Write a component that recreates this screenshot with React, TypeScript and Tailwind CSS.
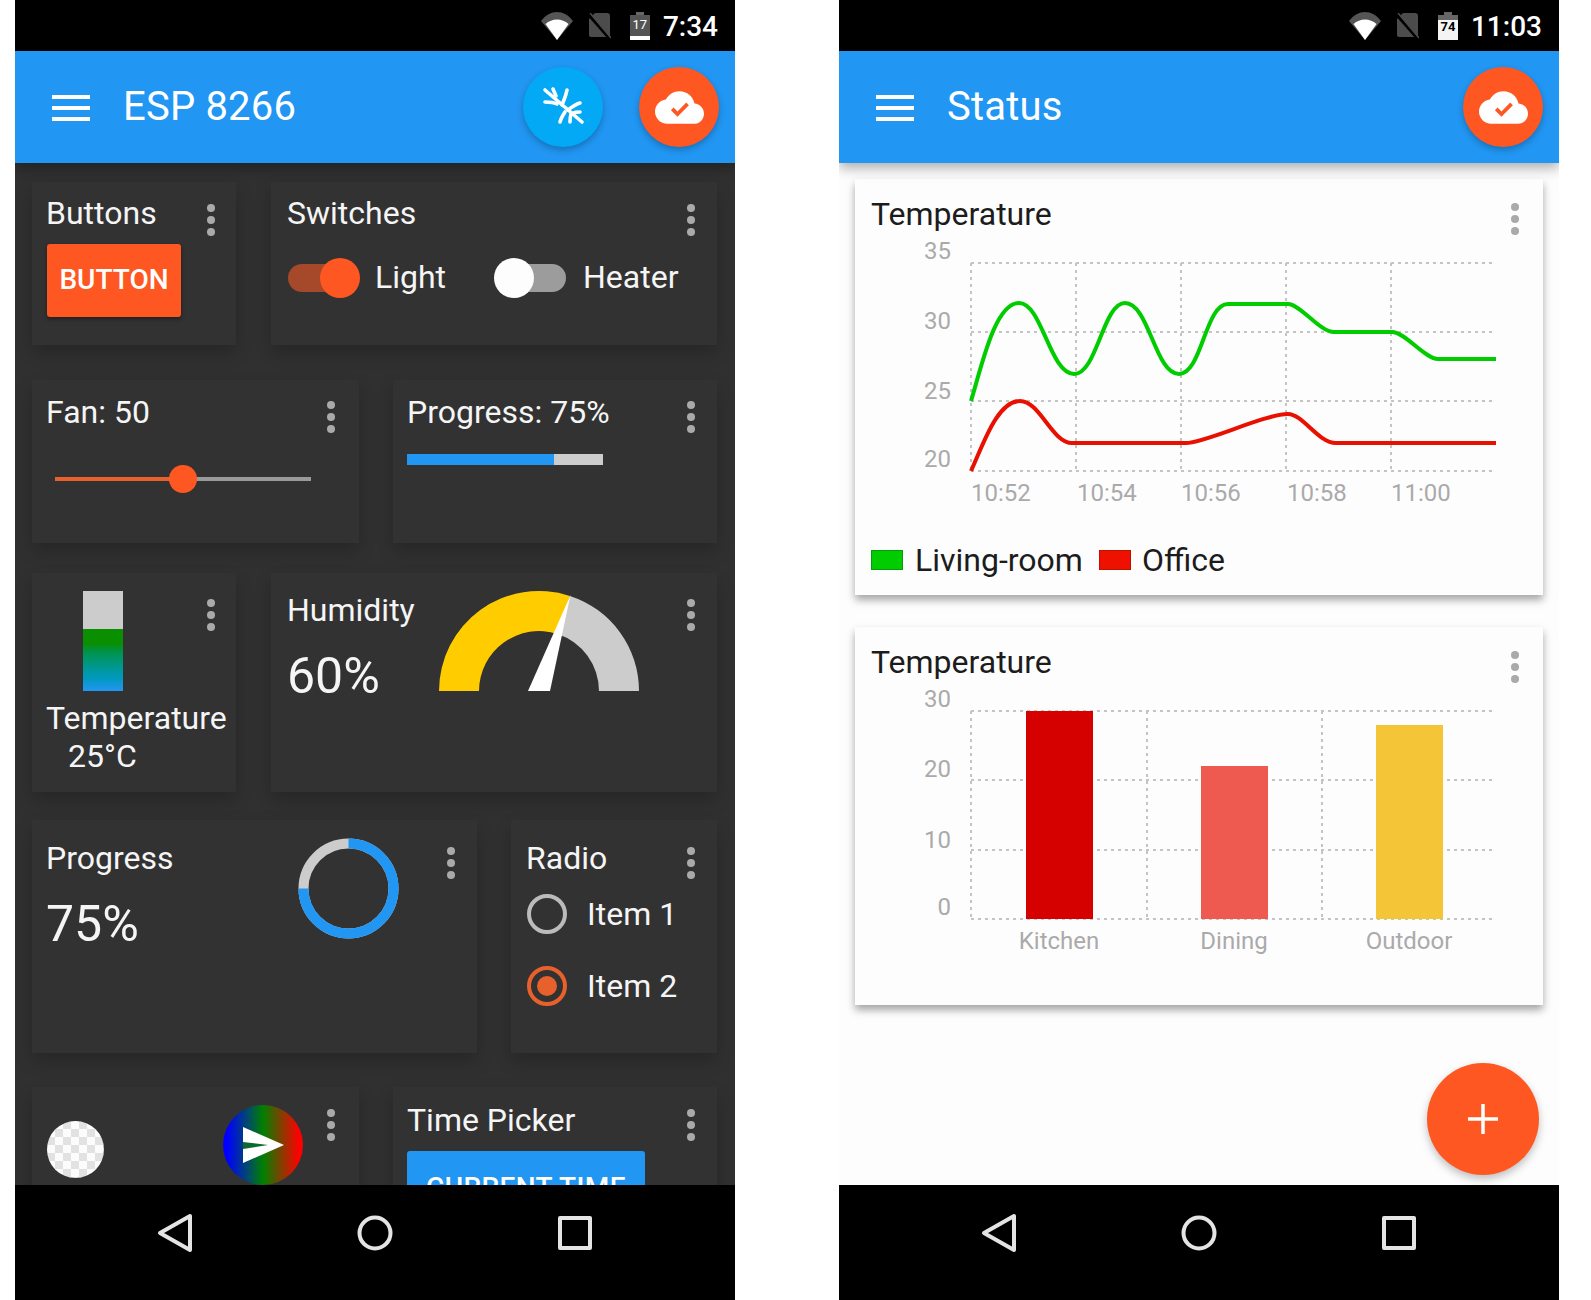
import type { ReactNode } from 'react';

function Dots({ className }: { className: string }) {
  return (
    <div className={`absolute flex flex-col gap-[4px] ${className}`}>
      <span className="w-[8px] h-[8px] rounded-full bg-[#aaaaaa]" />
      <span className="w-[8px] h-[8px] rounded-full bg-[#aaaaaa]" />
      <span className="w-[8px] h-[8px] rounded-full bg-[#aaaaaa]" />
    </div>
  );
}

function DarkCard({ className, dots, children }: { className: string; dots: string; children: ReactNode }) {
  return (
    <div className={`relative shrink-0 bg-[#323232] shadow-[0_8px_16px_rgba(0,0,0,0.2)] ${className}`}>
      {children}
      <Dots className={dots} />
    </div>
  );
}

function Title({ children }: { children: ReactNode }) {
  return <div className="-ml-[1px] h-[38px] text-[32px] leading-[38px] whitespace-nowrap">{children}</div>;
}

function Switch({ on }: { on: boolean }) {
  return (
    <div className="relative w-[72px] h-[40px]">
      <div
        className={
          on
            ? 'absolute left-0 top-[6px] w-[64px] h-[28px] rounded-full bg-[#a5492a]'
            : 'absolute left-[8px] top-[6px] w-[64px] h-[28px] rounded-full bg-[#9c9c9c]'
        }
      />
      <div
        className={
          on
            ? 'absolute right-0 top-0 w-[40px] h-[40px] rounded-full bg-[#ff5722]'
            : 'absolute left-0 top-0 w-[40px] h-[40px] rounded-full bg-[#fdfdfd]'
        }
      />
    </div>
  );
}

function StatusBar({ time, battery, full }: { time: string; battery: string; full: boolean }) {
  return (
    <div className="h-[51px] bg-black flex items-center justify-end pr-[17px] text-white">
      <svg width="32" height="28" viewBox="0 0 32 28" className="mr-[15px] mt-[1px]">
        <path d="M0 9C9 -3 23 -3 32 9L16 28Z" fill="#555555" />
        <path d="M4.5 12C11 6 21 6 27.5 12L16 28Z" fill="#ffffff" />
      </svg>
      <svg width="23" height="27" viewBox="0 0 23 27" className="mr-[19px] mt-[2px]">
        <path d="M7 0H19C21 0 22 1 22 3V23L21 24H3C2 24 1 23 1 22V6Z" fill="#4c4c4c" />
        <path d="M0 1L22 26" stroke="#000000" strokeWidth="3" />
        <path d="M2 0L23 25" stroke="#4c4c4c" strokeWidth="1.5" />
      </svg>
      <div className="relative w-[20px] h-[28px] mr-[13px] flex flex-col items-center mt-[1px]">
        <div className="w-[8px] h-[3px] bg-[#666666]" />
        <div
          className={
            full
              ? 'w-[20px] h-[25px] flex flex-col bg-[#f4f4f4] text-black text-[13px] leading-[14px] text-center font-bold'
              : 'w-[20px] h-[25px] flex flex-col bg-[#555555] text-white text-[13px] leading-[20px] text-center'
          }
        >
          {full && <div className="h-[5px] shrink-0 bg-[#666666]" />}
          {battery}
          {!full && <div className="mt-auto h-[4px] bg-white" />}
        </div>
      </div>
      <span className="text-[28px] font-medium leading-none mt-[3px]">{time}</span>
    </div>
  );
}

function Fab({ className, children }: { className: string; children: ReactNode }) {
  return (
    <div className={`w-[80px] h-[80px] rounded-full flex items-center justify-center shadow-[0_3px_6px_rgba(0,0,0,0.25)] ${className}`}>
      {children}
    </div>
  );
}

function CloudIcon() {
  return (
    <svg width="49" height="49" viewBox="0 0 24 24" fill="#ffffff">
      <path d="M19.35 10.04C18.67 6.59 15.64 4 12 4 9.11 4 6.6 5.64 5.35 8.04 2.34 8.36 0 10.91 0 14c0 3.31 2.69 6 6 6h13c2.76 0 5-2.24 5-5 0-2.64-2.05-4.78-4.65-4.96zM11 16.5l-3.2-3.2 1.3-1.3 1.9 1.9L15.3 9.6l1.3 1.3L11 16.5z" />
    </svg>
  );
}

function AppBar({ title, children }: { title: string; children: ReactNode }) {
  return (
    <div className="relative z-10 h-[112px] bg-[#2196f3] flex items-center pl-[37px] pr-[16px] text-white shadow-[0_5px_12px_rgba(0,0,0,0.32)]">
      <div className="w-[38px] flex flex-col gap-[7px] mt-[1px]">
        <span className="h-[4px] bg-white" />
        <span className="h-[4px] bg-white" />
        <span className="h-[4px] bg-white" />
      </div>
      <div className="ml-[33px] flex-1 text-[40px] leading-none tracking-[0.2px]">{title}</div>
      {children}
    </div>
  );
}

function NavBar() {
  return (
    <div className="h-[115px] bg-black flex justify-center items-start gap-[160px] pt-[28px]">
      <svg width="40" height="40" viewBox="0 0 40 40" fill="none" stroke="#e4e4e4" strokeWidth="4" strokeLinejoin="round">
        <path d="M35 3V37L5 20Z" />
      </svg>
      <svg width="40" height="40" viewBox="0 0 40 40" fill="none" stroke="#e4e4e4" strokeWidth="4">
        <circle cx="20" cy="20" r="15.5" />
      </svg>
      <svg width="40" height="40" viewBox="0 0 40 40" fill="none" stroke="#e4e4e4" strokeWidth="4" strokeLinejoin="round">
        <rect x="5" y="5" width="30" height="30" />
      </svg>
    </div>
  );
}

function LeftPhone() {
  return (
    <div className="w-[720px] h-full flex flex-col shrink-0 overflow-hidden">
      <StatusBar time="7:34" battery="17" full={false} />
      <AppBar title="ESP 8266">
        <Fab className="bg-[#03a9f4] mr-[36px]">
          <svg width="80" height="80" viewBox="0 0 80 80" fill="none" stroke="#ffffff" strokeWidth="3.6" strokeLinecap="round">
            <path d="M22 23L59 55" />
            <path d="M44 23C43 29 41 33 39 38" />
            <path d="M30 22L33 29" />
            <path d="M22 35C26 35 30 35 34 37" />
            <path d="M57 36C53 37 49 40 45 43" />
            <path d="M57 45C55 45 52 45 50 46" />
            <path d="M37 55C38 51 40 48 42 45" />
            <path d="M47 55C47 52 47 50 48 47" />
          </svg>
        </Fab>
        <Fab className="bg-[#ff5722]">
          <CloudIcon />
        </Fab>
      </AppBar>

      <div className="flex-1 min-h-0 overflow-hidden bg-[#303030] px-[17px] text-[#f5f5f5]">
        <div className="flex gap-[35px] mt-[19px] h-[163px]">
          <DarkCard className="w-[204px] pl-[15px] pt-[12px]" dots="right-[21px] top-[22px]">
            <Title>Buttons</Title>
            <div className="mt-[12px] w-[134px] h-[73px] pb-[2px] rounded-[3px] bg-[#ff5722] text-white text-[28px] font-medium flex items-center justify-center shadow-[0_2px_4px_rgba(0,0,0,0.4)]">
              BUTTON
            </div>
          </DarkCard>
          <DarkCard className="w-[446px] pl-[17px] pt-[12px]" dots="right-[22px] top-[22px]">
            <Title>Switches</Title>
            <div className="mt-[26px] flex items-center text-[32px] leading-[38px]">
              <Switch on />
              <span className="ml-[15px] w-[71px] mb-[2px]">Light</span>
              <span className="ml-[48px]">
                <Switch on={false} />
              </span>
              <span className="ml-[17px] mb-[2px]">Heater</span>
            </div>
          </DarkCard>
        </div>

        <div className="flex gap-[34px] mt-[35px] h-[163px]">
          <DarkCard className="w-[327px] pl-[15px] pt-[13px]" dots="right-[24px] top-[21px]">
            <Title>Fan: 50</Title>
            <div className="relative ml-[8px] mt-[34px] w-[256px] h-[28px] flex items-center">
              <div className="w-[114px] h-[4px] bg-[#e8602c]" />
              <div className="flex-1 h-[4px] bg-[#9a9a9a]" />
              <div className="absolute left-[114px] top-0 w-[28px] h-[28px] rounded-full bg-[#ff5722]" />
            </div>
          </DarkCard>
          <DarkCard className="w-[324px] pl-[15px] pt-[13px]" dots="right-[22px] top-[21px]">
            <Title>Progress: 75%</Title>
            <div className="-ml-[1px] mt-[23px] w-[196px] h-[11px] flex bg-[#cccccc]">
              <div className="w-[147px] bg-[#2196f3]" />
            </div>
          </DarkCard>
        </div>

        <div className="flex gap-[35px] mt-[30px] h-[219px]">
          <DarkCard className="w-[204px] pl-[15px] pt-[18px]" dots="right-[21px] top-[26px]">
            <div className="ml-[36px] w-[40px] h-[100px] flex flex-col bg-[#cccccc]">
              <div className="mt-[38px] flex-1 bg-gradient-to-b from-[#0a8f00] from-[25%] to-[#2196f3]" />
            </div>
            <div className="mt-[8px]">
              <Title>Temperature</Title>
            </div>
            <div className="ml-[22px]">
              <Title>25°C</Title>
            </div>
          </DarkCard>
          <DarkCard className="w-[446px] pl-[17px] pt-[18px] flex" dots="right-[22px] top-[26px]">
            <div className="w-[151px]">
              <Title>Humidity</Title>
              <div className="-ml-[1px] mt-[19px] text-[50px] leading-[56px]">60%</div>
            </div>
            <svg width="200" height="100" viewBox="439 591 200 100">
              <path d="M439 691A100 100 0 0 1 569.9 595.9L557.5 634A60 60 0 0 0 479 691Z" fill="#ffcc00" />
              <path d="M569.9 595.9A100 100 0 0 1 639 691H599A60 60 0 0 0 557.5 634Z" fill="#cccccc" />
              <path d="M528 691L570.5 595L550 691Z" fill="#ffffff" />
            </svg>
          </DarkCard>
        </div>

        <div className="flex gap-[34px] mt-[28px] h-[233px]">
          <DarkCard className="w-[445px] pl-[15px] pt-[18px] flex" dots="right-[22px] top-[27px]">
            <div className="w-[251px]">
              <div className="mt-[1px]">
                <Title>Progress</Title>
              </div>
              <div className="-ml-[1px] mt-[19px] text-[50px] leading-[56px]">75%</div>
            </div>
            <svg width="101" height="101" viewBox="0 0 101 101" fill="none" strokeWidth="10">
              <circle cx="50.5" cy="50.5" r="45" stroke="#cccccc" />
              <path d="M50.5 5.5A45 45 0 1 1 5.5 50.5" stroke="#2196f3" />
            </svg>
          </DarkCard>
          <DarkCard className="w-[206px] pl-[16px] pt-[19px]" dots="right-[22px] top-[27px]">
            <Title>Radio</Title>
            <div className="mt-[16px] flex items-center text-[32px] leading-[40px]">
              <span className="w-[40px] h-[40px] rounded-full border-[4px] border-[#bbbbbb]" />
              <span className="ml-[20px] mt-[1px]">Item 1</span>
            </div>
            <div className="mt-[32px] flex items-center text-[32px] leading-[40px]">
              <span className="w-[40px] h-[40px] rounded-full border-[4px] border-[#e8602c] flex items-center justify-center">
                <span className="w-[20px] h-[20px] rounded-full bg-[#e8602c]" />
              </span>
              <span className="ml-[20px]">Item 2</span>
            </div>
          </DarkCard>
        </div>

        <div className="flex gap-[34px] mt-[34px] h-[150px]">
          <DarkCard className="w-[327px] pl-[15px] pt-[18px] flex items-start" dots="right-[24px] top-[22px]">
            <svg width="57" height="57" viewBox="0 0 57 57" className="mt-[16px]">
              <defs>
                <pattern id="checker" width="16" height="16" patternUnits="userSpaceOnUse">
                  <rect width="16" height="16" fill="#fcfcfc" />
                  <rect width="8" height="8" fill="#e2e2e2" />
                  <rect x="8" y="8" width="8" height="8" fill="#e2e2e2" />
                </pattern>
              </defs>
              <circle cx="28.5" cy="28.5" r="28.5" fill="url(#checker)" />
            </svg>
            <svg width="80" height="80" viewBox="0 0 80 80" className="ml-[119px]">
              <defs>
                <linearGradient id="rgb" x1="0" x2="1" y1="0" y2="0">
                  <stop offset="0.05" stopColor="#0000ff" />
                  <stop offset="0.5" stopColor="#008000" />
                  <stop offset="0.95" stopColor="#ff0000" />
                </linearGradient>
              </defs>
              <circle cx="40" cy="40" r="40" fill="url(#rgb)" />
              <path d="M20 22L61 40L20 58Z" fill="#ffffff" />
              <path d="M20 37L45 40L20 44Z" fill="#0a6a30" />
            </svg>
          </DarkCard>
          <DarkCard className="w-[324px] pl-[15px] pt-[14px]" dots="right-[22px] top-[22px]">
            <Title>Time Picker</Title>
            <div className="-ml-[1px] mt-[12px] w-[238px] h-[73px] rounded-[3px] bg-[#2196f3] text-white text-[28px] font-medium tracking-[0.4px] flex items-center justify-center">
              CURRENT TIME
            </div>
          </DarkCard>
        </div>
      </div>
      <NavBar />
    </div>
  );
}

function LightCard({ children }: { children: ReactNode }) {
  return (
    <div className="relative bg-[#fefdfe] pt-[16px] shadow-[0_5px_8px_rgba(0,0,0,0.35)]">
      <div className="pl-[16px] h-[38px] text-[32px] leading-[38px] text-[#1c1c1c]">Temperature</div>
      {children}
      <Dots className="right-[24px] top-[24px]" />
    </div>
  );
}

function LineChart() {
  const yLabels: [string, number][] = [['35', 259], ['30', 329], ['25', 399], ['20', 467]];
  const xLabels: [string, number][] = [['10:52', 971], ['10:54', 1077], ['10:56', 1181], ['10:58', 1287], ['11:00', 1391]];
  return (
    <svg width="688" height="284" viewBox="855 233 688 284" className="block text-[24px] fill-[#aaaaaa]">
      <g stroke="#c4c4c4" strokeWidth="2" strokeDasharray="3 4" fill="none">
        {[263, 332, 401, 471].map(y => (
          <path key={y} d={`M971 ${y}H1496`} />
        ))}
        {[971, 1076, 1181, 1286, 1391].map(x => (
          <path key={x} d={`M${x} 263V471`} />
        ))}
      </g>
      <path
        d="M971 401C982 365 995 303 1019 303C1042 303 1050 374 1074 374C1097 374 1103 303 1125 303C1149 303 1155 374 1179 374C1202 374 1205 304 1228 304L1288 304C1300 304 1320 332 1334 332L1392 332C1405 332 1425 359 1438 359L1496 359"
        fill="none"
        stroke="#00cc00"
        strokeWidth="4"
      />
      <path
        d="M971 471C983 445 997 401 1020 401C1040 401 1052 443 1072 443L1186 443C1205 443 1265 414 1288 414C1303 414 1318 443 1336 443L1496 443"
        fill="none"
        stroke="#e81000"
        strokeWidth="4"
      />
      {yLabels.map(([t, y]) => (
        <text key={t} x="951" y={y} textAnchor="end">
          {t}
        </text>
      ))}
      {xLabels.map(([t, x]) => (
        <text key={t} x={x} y="501">
          {t}
        </text>
      ))}
    </svg>
  );
}

function BarChart() {
  const yLabels: [string, number][] = [['30', 707], ['20', 777], ['10', 848], ['0', 915]];
  const bars: [string, number, number, string][] = [
    ['Kitchen', 1026, 711, '#d50000'],
    ['Dining', 1201, 766, '#ef5a50'],
    ['Outdoor', 1376, 725, '#f5c538'],
  ];
  return (
    <svg width="688" height="280" viewBox="855 681 688 280" className="block text-[24px] fill-[#aaaaaa]">
      <g stroke="#c4c4c4" strokeWidth="2" strokeDasharray="3 4" fill="none">
        {[711, 780, 850, 919].map(y => (
          <path key={y} d={`M971 ${y}H1496`} />
        ))}
        {[971, 1147, 1322].map(x => (
          <path key={x} d={`M${x} 711V919`} />
        ))}
      </g>
      {yLabels.map(([t, y]) => (
        <text key={t} x="951" y={y} textAnchor="end">
          {t}
        </text>
      ))}
      {bars.map(([name, x, top, color]) => (
        <g key={name}>
          <rect x={x} y={top} width="67" height={919 - top} fill={color} />
          <text x={x + 33} y="949" textAnchor="middle">
            {name}
          </text>
        </g>
      ))}
    </svg>
  );
}

function RightPhone() {
  return (
    <div className="w-[720px] h-full flex flex-col shrink-0 overflow-hidden">
      <StatusBar time="11:03" battery="74" full />
      <AppBar title="Status">
        <Fab className="bg-[#ff5722]">
          <CloudIcon />
        </Fab>
      </AppBar>
      <div className="relative flex-1 min-h-0 bg-[#fefdfe] px-[16px] pt-[16px] flex flex-col gap-[33px]">
        <div className="h-[415px]">
          <LightCard>
            <LineChart />
            <div className="mt-[24px] pl-[16px] pb-[16px] h-[54px] flex items-center text-[32px] leading-[38px] text-[#1c1c1c]">
              <span className="w-[32px] h-[20px] bg-[#00cc00] border border-[#0a9a0a]" />
              <span className="ml-[12px]">Living-room</span>
              <span className="ml-[16px] w-[32px] h-[20px] bg-[#ee1100] border border-[#c01000]" />
              <span className="ml-[11px]">Office</span>
            </div>
          </LightCard>
        </div>
        <div className="h-[379px]">
          <LightCard>
            <BarChart />
            <div className="h-[44px]" />
          </LightCard>
        </div>
        <div className="absolute right-[20px] bottom-[10px] w-[112px] h-[112px] rounded-full bg-[#ff5722] flex items-center justify-center shadow-[0_4px_8px_rgba(0,0,0,0.25)]">
          <svg width="30" height="30" viewBox="0 0 30 30" stroke="#ffffff" strokeWidth="3.5">
            <path d="M15 0V30M0 15H30" />
          </svg>
        </div>
      </div>
      <NavBar />
    </div>
  );
}

export default function App() {
  return (
    <div className="w-[1591px] h-[1300px] bg-white flex gap-[104px] pl-[15px] font-['Roboto',sans-serif] overflow-hidden">
      <LeftPhone />
      <RightPhone />
    </div>
  );
}
